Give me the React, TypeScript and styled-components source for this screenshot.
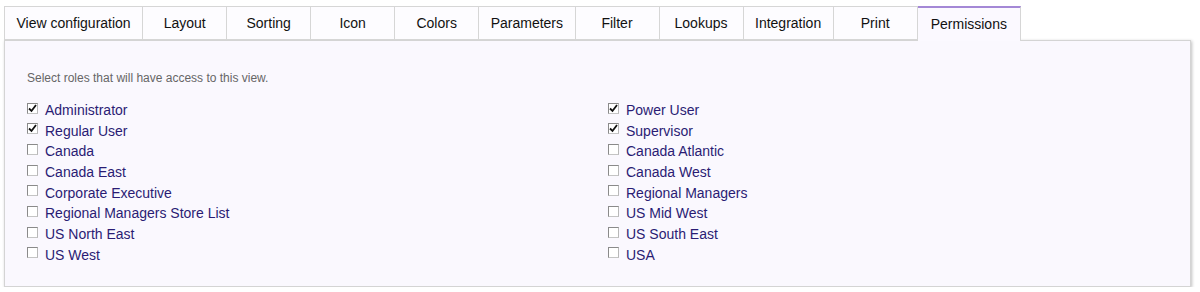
import styled, { createGlobalStyle } from 'styled-components';

const GlobalStyle = createGlobalStyle`
    body {
        margin: 0;
        background: #fff;
        font-family: "Liberation Sans", Arial, sans-serif;
    }
`;

const tabs = [
    'View configuration',
    'Layout',
    'Sorting',
    'Icon',
    'Colors',
    'Parameters',
    'Filter',
    'Lookups',
    'Integration',
    'Print',
    'Permissions',
];

const left: [string, boolean][] = [
    ['Administrator', true],
    ['Regular User', true],
    ['Canada', false],
    ['Canada East', false],
    ['Corporate Executive', false],
    ['Regional Managers Store List', false],
    ['US North East', false],
    ['US West', false],
];

const right: [string, boolean][] = [
    ['Power User', true],
    ['Supervisor', true],
    ['Canada Atlantic', false],
    ['Canada West', false],
    ['Regional Managers', false],
    ['US Mid West', false],
    ['US South East', false],
    ['USA', false],
];

const Check = ({ checked }: { checked: boolean }) => (
    <Box>
        {checked && (
            <svg width="9" height="9" viewBox="0 0 9 9">
                <path d="M1 4.5 L3.5 7 L8 1" fill="none" stroke="#111" strokeWidth="1.8" />
            </svg>
        )}
    </Box>
);

const App = () => {
    const rows = left.map((l, i) => [l, right[i]]);

    return (
        <Page>
            <GlobalStyle />
            <TabBar>
                {tabs.map((t) => (
                    <Tab key={t} $active={t === 'Permissions'}>
                        {t}
                    </Tab>
                ))}
            </TabBar>
            <Panel>
                <Intro>Select roles that will have access to this view.</Intro>
                <Roles>
                    {rows.map((pair) =>
                        pair.map(([name, checked]) => (
                            <Role key={name}>
                                <Check checked={checked} />
                                <span>{name}</span>
                            </Role>
                        ))
                    )}
                </Roles>
            </Panel>
        </Page>
    );
};

export default App;

const Page = styled.div`
    padding: 6px 9px 0 4px;
`;

const TabBar = styled.div`
    display: flex;
    position: relative;
    z-index: 1;
`;

const Tab = styled.div<{ $active?: boolean }>`
    box-sizing: border-box;
    min-width: 84px;
    height: ${(p) => (p.$active ? '35px' : '34px')};
    padding: ${(p) => (p.$active ? '0 13px 1px' : '0 11.5px')};
    display: flex;
    align-items: center;
    justify-content: center;
    font-size: 14px;
    color: #111;
    background: ${(p) => (p.$active ? '#fbf9ff' : '#fdfcff')};
    border: 1px solid #d6d6d6;
    border-left: none;
    border-bottom: ${(p) => (p.$active ? 'none' : '1px solid #d6d6d6')};
    border-top: ${(p) => (p.$active ? '2px solid #a488d6' : '1px solid #d6d6d6')};
    &:first-child {
        border-left: 1px solid #d6d6d6;
    }
`;

const Panel = styled.div`
    box-sizing: border-box;
    height: 247px;
    margin-top: -1px;
    background: #faf8fe;
    border: 1px solid #d4d4d4;
    box-shadow: 1px 1px 3px rgba(0, 0, 0, 0.25);
    padding: 30px 0 0 22px;
`;

const Intro = styled.div`
    font-size: 12px;
    color: #666;
    margin-bottom: 17px;
`;

const Roles = styled.div`
    display: grid;
    grid-template-columns: 581px 1fr;
    row-gap: 4.7px;
`;

const Role = styled.label`
    display: flex;
    align-items: center;
    gap: 7px;
    height: 16px;
    font-size: 14px;
    color: #2a1c74;
`;

const Box = styled.span`
    box-sizing: border-box;
    width: 11px;
    height: 11px;
    margin-top: -4px;
    border: 1px solid #8a8a8a;
    border-right-color: #b8b8b8;
    border-bottom-color: #c4c4c4;
    background: #fff;
    display: flex;
    align-items: center;
    justify-content: center;
`;
